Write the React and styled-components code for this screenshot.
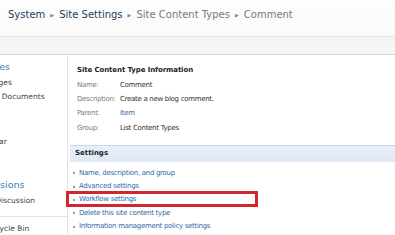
import React from "react";
import styled, { createGlobalStyle } from "styled-components";

const GlobalStyle = createGlobalStyle`
  html, body {
    margin: 0;
    padding: 0;
    background: #ffffff;
  }

  body {
    font-family: "DejaVu Sans", Verdana, sans-serif;
  }
`;

const Page = styled.div`
  width: 395px;
  height: 235px;
  overflow: hidden;
  background: #ffffff;
  display: flex;
  flex-direction: column;
`;

const TitleBar = styled.div`
  height: 36px;
  box-sizing: border-box;
  padding: 8px 0 0 8px;
  background: linear-gradient(#fdfdfd, #fafafa);
`;

const Breadcrumb = styled.div`
  display: flex;
  align-items: center;
  font-size: 10px;
  line-height: 14px;
  white-space: nowrap;
`;

const Crumb = styled.span`
  color: ${(p) => (p.$current ? "#7a7a7a" : "#22405c")};
`;

const Sep = styled.span`
  color: #8a8a8a;
  font-size: 5px;
  margin: 0 5px;
`;

const RibbonStrip = styled.div`
  height: 17px;
  background: #f5f5f5;
  border-top: 1px solid #e6e6e6;
  border-bottom: 1px solid #d7d7d7;
`;

const Body = styled.div`
  flex: 1;
  display: flex;
  min-height: 0;
`;

const QuickLaunch = styled.nav`
  width: 67px;
  flex-shrink: 0;
  overflow: hidden;
  border-right: 1px solid #e2e2e2;
  padding-top: 5px;
`;

const NavInner = styled.div`
  margin-left: -31px;
  width: 140px;
`;

const NavSection = styled.div`
  margin-bottom: 15px;
`;

const NavHeader = styled.div`
  color: #3a78b8;
  font-size: 9.5px;
  line-height: 14px;
  margin-bottom: 2px;
  white-space: nowrap;
`;

const NavItem = styled.div`
  color: #444444;
  font-size: 7.5px;
  line-height: 14px;
  padding-left: ${(p) => p.$indent || 4}px;
  white-space: nowrap;
`;

const NavDivider = styled.div`
  border-top: 1px solid #e4e4e4;
  margin: -7px 0 5px 31px;
`;

const Content = styled.main`
  flex: 1;
  padding-top: 9px;
  font-size: 7px;
  color: #333333;
`;

const InfoBlock = styled.section`
  padding-left: 9px;
`;

const SectionTitle = styled.div`
  font-weight: bold;
  color: #222222;
  line-height: 12px;
  margin-bottom: 2px;
  letter-spacing: -0.1px;
`;

const InfoRow = styled.div`
  display: flex;
  line-height: 14.2px;
  letter-spacing: -0.3px;
`;

const Label = styled.span`
  width: 43px;
  flex-shrink: 0;
  color: #7b7b7b;
`;

const Value = styled.span`
  color: ${(p) => (p.$link ? "#2f6aa8" : "#333333")};
`;

const SettingsBar = styled.div`
  margin: 10px 0 0 2px;
  height: 17px;
  box-sizing: border-box;
  padding-left: 5px;
  display: flex;
  align-items: center;
  font-weight: bold;
  color: #222222;
  background: linear-gradient(#e9f0fb, #dfe8f6);
  border-top: 1px solid #c8d6ea;
  border-bottom: 1px solid #e4ebf5;
`;

const LinkList = styled.ul`
  list-style: none;
  margin: 5px 0 0 0;
  padding: 0 0 0 5px;
`;

const LinkItem = styled.li`
  position: relative;
  display: flex;
  align-items: center;
  line-height: 13.3px;
  color: #2f6aa8;
  letter-spacing: -0.3px;
  white-space: nowrap;

  &::before {
    content: "";
    width: 2px;
    height: 2px;
    background: #9a9a9a;
    margin-right: 4px;
  }
`;

const Highlight = styled.span`
  position: absolute;
  left: -7px;
  top: -2px;
  width: 192px;
  height: 16px;
  box-sizing: border-box;
  border: 3px solid #d4252f;
  pointer-events: none;
`;

const info = [
  { label: "Name:", value: "Comment" },
  { label: "Description:", value: "Create a new blog comment." },
  { label: "Parent:", value: "Item", link: true },
  { label: "Group:", value: "List Content Types" },
];

const settings = [
  "Name, description, and group",
  "Advanced settings",
  "Workflow settings",
  "Delete this site content type",
  "Information management policy settings",
];

export default function App() {
  return (
    <Page>
      <GlobalStyle />
      <TitleBar>
        <Breadcrumb>
          <Crumb>System</Crumb>
          <Sep>▶</Sep>
          <Crumb>Site Settings</Crumb>
          <Sep>▶</Sep>
          <Crumb $current>Site Content Types</Crumb>
          <Sep>▶</Sep>
          <Crumb $current>Comment</Crumb>
        </Breadcrumb>
      </TitleBar>
      <RibbonStrip />
      <Body>
        <QuickLaunch>
          <NavInner>
            <NavSection>
              <NavHeader>Libraries</NavHeader>
              <NavItem>Site Pages</NavItem>
              <NavItem>Shared Documents</NavItem>
            </NavSection>
            <NavSection>
              <NavHeader>Lists</NavHeader>
              <NavItem>Calendar</NavItem>
              <NavItem>Tasks</NavItem>
            </NavSection>
            <NavSection>
              <NavHeader>Discussions</NavHeader>
              <NavItem>Team Discussion</NavItem>
            </NavSection>
            <NavDivider />
            <NavItem $indent={17}>Recycle Bin</NavItem>
          </NavInner>
        </QuickLaunch>
        <Content>
          <InfoBlock>
            <SectionTitle>Site Content Type Information</SectionTitle>
            {info.map((row) => (
              <InfoRow key={row.label}>
                <Label>{row.label}</Label>
                <Value $link={row.link}>{row.value}</Value>
              </InfoRow>
            ))}
          </InfoBlock>
          <SettingsBar>Settings</SettingsBar>
          <LinkList>
            {settings.map((s) => (
              <LinkItem key={s}>
                {s}
                {s === "Workflow settings" && <Highlight />}
              </LinkItem>
            ))}
          </LinkList>
        </Content>
      </Body>
    </Page>
  );
}
